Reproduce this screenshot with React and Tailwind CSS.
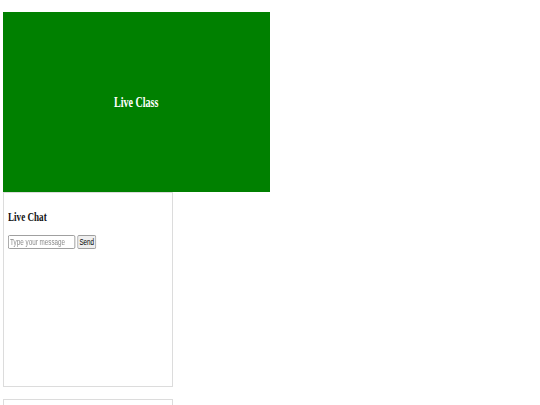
const serif = { fontFamily: '"Liberation Serif", "Times New Roman", serif' };
const sans = { fontFamily: '"Liberation Sans", Arial, sans-serif' };

const LiveClass = () => {
  return (
    <div className="flex h-[180px] w-[267px] items-center justify-center bg-[#008000]">
      <span
        className="inline-block scale-x-[0.67] text-[15px] font-bold text-white"
        style={serif}
      >
        Live Class
      </span>
    </div>
  );
};

const LiveChat = () => {
  return (
    <div className="h-[195px] w-[170px] border border-[#dcdcdc] px-[4px] pt-[16px]">
      <h2
        className="origin-left scale-x-[0.7] text-[13px] leading-[16px] font-bold text-[#111]"
        style={serif}
      >
        Live Chat
      </h2>
      <div className="mt-[10px] flex origin-left scale-x-[0.7] items-center gap-[3px]" style={sans}>
        <input
          type="text"
          placeholder="Type your message"
          className="h-[14px] w-[96px] rounded-[2px] border border-[#8f8f8f] px-[2px] text-[9px] text-[#222] placeholder:text-[#8a8a8a]"
        />
        <button className="h-[14px] w-[27px] rounded-[2px] border border-[#8f8f8f] bg-[#efefef] text-[9px] leading-none text-black">
          Send
        </button>
      </div>
    </div>
  );
};

export default function App() {
  return (
    <div className="min-h-screen bg-white pt-[12px] pl-[3px]">
      <LiveClass />
      <LiveChat />
      <div className="mt-[12px] h-[40px] w-[170px] border border-[#dcdcdc]"></div>
    </div>
  );
}
